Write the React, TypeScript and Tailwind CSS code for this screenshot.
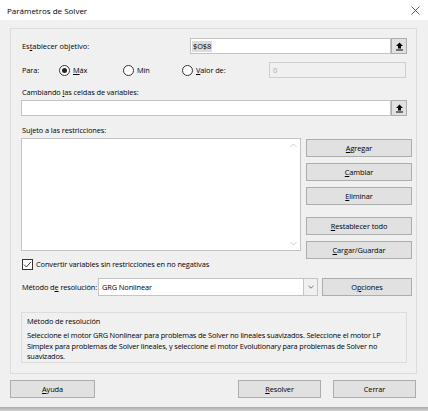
import type { ReactNode } from 'react'

function Key({ children }: { children: ReactNode }) {
  return <span className="underline underline-offset-[1px] decoration-[0.5px]">{children}</span>
}

function PickerButton() {
  return (
    <div className="w-[16px] h-[16px] shrink-0 flex items-center justify-center bg-[#e1e1e1] border border-[#adadad]">
      <svg width="9" height="9" viewBox="0 0 9 9">
        <path d="M4.5 0.5 L8 4 L6 4 L6 6.5 L3 6.5 L3 4 L1 4 Z" fill="#000" />
        <rect x="1" y="7.5" width="7" height="1" fill="#000" />
      </svg>
    </div>
  )
}

function Radio({ checked }: { checked?: boolean }) {
  return (
    <span className="w-[11px] h-[11px] shrink-0 rounded-full border border-[#333] bg-white flex items-center justify-center">
      {checked && <span className="w-[5px] h-[5px] rounded-full bg-[#222]" />}
    </span>
  )
}

function Btn({ children, className = '' }: { children: ReactNode; className?: string }) {
  return (
    <div
      className={`h-[18px] flex items-center justify-center bg-[#e1e1e1] border border-[#adadad] text-black ${className}`}
    >
      {children}
    </div>
  )
}

export default function App() {
  return (
    <div className="w-[428px] h-[411px] bg-[#f0f0f0] flex flex-col font-['Open_Sans','Noto_Sans',sans-serif] text-[7.4px] tracking-[-0.1px] leading-[11px] text-black overflow-hidden">
      {/* Title bar */}
      <div className="h-[20px] bg-white flex items-center justify-between pl-[7px] pr-[8px] text-[8px] tracking-normal">
        <span>Parámetros de Solver</span>
        <svg width="9" height="9" viewBox="0 0 9 9">
          <path d="M0.5 0.5 L8.5 8.5 M8.5 0.5 L0.5 8.5" stroke="#333" strokeWidth="0.8" />
        </svg>
      </div>

      {/* Main panel */}
      <div className="mt-[8px] ml-[10px] w-[407px] h-[346px] border border-[#dcdcdc] flex flex-col pl-[10px]">
        {/* Objective */}
        <div className="mt-[9px] h-[16px] flex items-center">
          <span className="w-[169px] pl-[1px] tracking-normal">
            Es<Key>t</Key>ablecer objetivo:
          </span>
          <div className="w-[201px] h-[16px] bg-white border border-[#c4c4c4] flex items-center pl-[1px]">
            <span className="bg-[#dcdcdc] px-[1px] leading-[11px]">$O$8</span>
          </div>
          <PickerButton />
        </div>

        {/* Para */}
        <div className="mt-[8px] h-[16px] flex items-center">
          <span className="w-[38px] pl-[1px]">Para:</span>
          <div className="w-[64px] flex items-center gap-[3px]">
            <Radio checked />
            <span>
              <Key>M</Key>áx
            </span>
          </div>
          <div className="w-[59px] flex items-center gap-[3px]">
            <Radio />
            <span>Mín</span>
          </div>
          <div className="w-[87px] flex items-center gap-[3px]">
            <Radio />
            <span>
              <Key>V</Key>alor de:
            </span>
          </div>
          <div className="w-[137px] h-[16px] bg-[#f0f0f0] border border-[#cfcfcf] flex items-center pl-[3px] text-[#a8a8a8]">
            0
          </div>
        </div>

        {/* Changing cells */}
        <div className="mt-[9px] h-[11px] pl-[1px]">
          Cambiando <Key>l</Key>as celdas de variables:
        </div>
        <div className="mt-[2px] h-[16px] flex">
          <div className="w-[370px] h-[16px] bg-white border border-[#c4c4c4]" />
          <PickerButton />
        </div>

        {/* Constraints */}
        <div className="mt-[9px] h-[11px] pl-[1px]">
          Su<Key>j</Key>eto a las restricciones:
        </div>
        <div className="mt-[2px] flex">
          <div className="w-[280px] flex flex-col">
            <div className="h-[113px] bg-white border border-[#c4c4c4] flex justify-end">
              <div className="w-[14px] flex flex-col items-center justify-between py-[4px]">
                <svg width="7" height="5" viewBox="0 0 7 5">
                  <path d="M0.5 4 L3.5 1 L6.5 4" stroke="#c2c2c2" strokeWidth="0.8" fill="none" />
                </svg>
                <svg width="7" height="5" viewBox="0 0 7 5">
                  <path d="M0.5 1 L3.5 4 L6.5 1" stroke="#c2c2c2" strokeWidth="0.8" fill="none" />
                </svg>
              </div>
            </div>
            <div className="mt-[8px] h-[11px] flex items-center gap-[3px] pl-[1px]">
              <span className="w-[11px] h-[11px] border border-[#333] bg-white flex items-center justify-center">
                <svg width="9" height="9" viewBox="0 0 9 9">
                  <path d="M1 4.6 L3.4 7 L8 1.8" stroke="#222" strokeWidth="0.9" fill="none" />
                </svg>
              </span>
              <span className="whitespace-nowrap">Convertir variables sin restricciones en no negativas</span>
            </div>
          </div>
          <div className="ml-[5px] w-[106px] pt-[1px] flex flex-col">
            <Btn>
              <span>
                <Key>A</Key>gregar
              </span>
            </Btn>
            <Btn className="mt-[6px]">
              <span>
                <Key>C</Key>ambiar
              </span>
            </Btn>
            <Btn className="mt-[6px]">
              <span>
                <Key>E</Key>liminar
              </span>
            </Btn>
            <Btn className="mt-[12px]">
              <span>
                <Key>R</Key>establecer todo
              </span>
            </Btn>
            <Btn className="mt-[6px]">
              <span>
                <Key>C</Key>argar/Guardar
              </span>
            </Btn>
          </div>
        </div>

        {/* Method */}
        <div className="mt-[8px] h-[18px] flex items-center">
          <span className="w-[77px] pl-[1px] whitespace-nowrap">
            Método d<Key>e</Key> resolución:
          </span>
          <div className="w-[220px] h-[18px] bg-white border border-[#c4c4c4] flex">
            <span className="flex-1 flex items-center pl-[3px]">GRG Nonlinear</span>
            <span className="w-[14px] bg-[#f0f0f0] border-l border-[#c4c4c4] flex items-center justify-center">
              <svg width="6" height="4" viewBox="0 0 6 4">
                <path d="M0.5 0.8 L3 3.2 L5.5 0.8" stroke="#555" strokeWidth="0.8" fill="none" />
              </svg>
            </span>
          </div>
          <Btn className="ml-[4px] w-[90px]">
            <span>
              O<Key>p</Key>ciones
            </span>
          </Btn>
        </div>

        {/* Description box */}
        <div className="mt-[16px] w-[386px] h-[51px] border border-[#dcdcdc] pl-[5px] pt-[2px] flex flex-col">
          <div className="h-[12px] leading-[12px]">Método de resolución</div>
          <div className="mt-[3px] leading-[10.5px] whitespace-nowrap tracking-[-0.17px]">
            Seleccione el motor GRG Nonlinear para problemas de Solver no lineales suavizados. Seleccione el motor LP
            <br />
            Simplex para problemas de Solver lineales, y seleccione el motor Evolutionary para problemas de Solver no
            <br />
            suavizados.
          </div>
        </div>
      </div>

      {/* Bottom buttons */}
      <div className="mt-[6px] h-[18px] flex pl-[10px]">
        <Btn className="w-[85px]">
          <span>
            <Key>A</Key>yuda
          </span>
        </Btn>
        <Btn className="ml-[143px] w-[83px] border-[#0078d7]">
          <span>
            <Key>R</Key>esolver
          </span>
        </Btn>
        <Btn className="ml-[12px] w-[83px]">
          <span>Cerrar</span>
        </Btn>
      </div>

      <div className="mt-auto h-[4px] bg-gradient-to-b from-[#a9a9a9] to-[#d6d6d6]" />
    </div>
  )
}
